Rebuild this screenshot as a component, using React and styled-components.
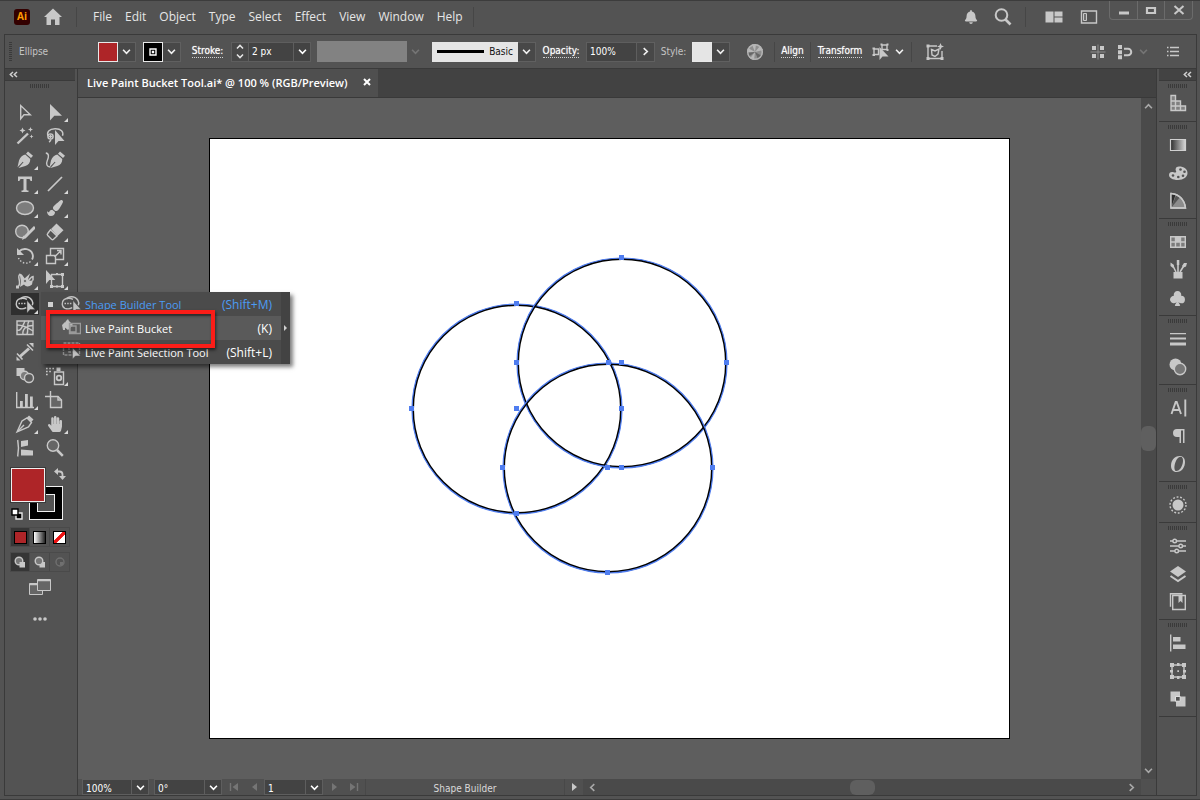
import React, { useState } from 'react'
import styled, { createGlobalStyle } from 'styled-components'
import { FaBell, FaPaintBrush, FaHandPaper } from 'react-icons/fa'
import { BsSuitClubFill } from 'react-icons/bs'

const GlobalStyle = createGlobalStyle`
  * {
    box-sizing: border-box;
  }
  body {
    margin: 0;
    background: #535353;
    color: #e6e6e6;
    font-family: 'Open Sans', 'Noto Sans', sans-serif;
    font-size: 12px;
  }
  button, select, input {
    font: inherit;
    color: inherit;
    background: none;
    border: 0;
    margin: 0;
    padding: 0;
  }
  a {
    color: inherit;
    text-decoration: none;
  }
  svg {
    display: block;
    flex: none;
  }
`

const small = `font-family: 'DejaVu Sans Condensed', 'DejaVu Sans', sans-serif; font-size: 10px;`

/* ---------- frame ---------- */

const Window = styled.div`
  display: flex;
  flex-direction: column;
  min-height: 100vh;
  padding: 0 3px 3px 4px;
  background: #535353;
  border-top: 1px solid #3c3c3c;
  border-bottom: 1px solid #3c3c3c;
  overflow: hidden;
`

const Body = styled.div`
  display: flex;
  flex: 1;
  border: 1px solid #3a3a3a;
  border-top: 0;
`

/* ---------- title bar ---------- */

const TitleBar = styled.header`
  display: flex;
  align-items: center;
  height: 34px;
  padding: 0 0 2px 10px;
  border-bottom: 1px solid #3a3a3a;
`

const Logo = styled.div`
  width: 16px;
  height: 16px;
  border-radius: 3px;
  background: #330000;
  color: #ff9a00;
  font-size: 10px;
  font-weight: 700;
  line-height: 15px;
  text-align: center;
`

const Divider = styled.div`
  width: 1px;
  height: 20px;
  background: #464646;
  margin: 0 ${p => p.$gap || 0}px;
`

const Menu = styled.nav`
  display: flex;
  gap: 13px;
  padding: 0 10px 0 16px;
  line-height: 20px;
`

const Spacer = styled.div`
  flex: 1;
`

const IconButton = styled.button`
  display: flex;
  align-items: center;
  justify-content: center;
  width: ${p => p.$w || 28}px;
  height: ${p => p.$h || 28}px;
  color: ${p => (p.$dim ? '#757575' : '#c8c8c8')};
`

const WindowButtons = styled.div`
  display: flex;
  align-self: flex-start;
  height: 19px;
  margin: 0 4px 0 7px;
  border: 1px solid #6b6b6b;
  border-top: 0;
  border-radius: 0 0 4px 4px;

  button + button {
    border-left: 1px solid #6b6b6b;
  }
`

/* ---------- control bar ---------- */

const ControlBar = styled.div`
  ${small}
  display: flex;
  align-items: center;
  height: 34px;
  border: 1px solid #3a3a3a;
  border-top: 0;
`

const VGrip = styled.div`
  width: 3px;
  height: 19px;
  margin: 0 7px 0 4px;
  background: repeating-linear-gradient(#3a3a3a 0 1px, transparent 1px 2px);
`

const Label = styled.span`
  width: ${p => p.$w}px;
  text-align: ${p => p.$align || 'center'};
  color: ${p => (p.$dim ? '#c4c4c4' : '#ffffff')};
`

const LinkLabel = styled.a`
  display: flex;
  justify-content: center;
  width: ${p => p.$w}px;

  span {
    line-height: 12px;
    border-bottom: 1px dotted #d0d0d0;
    color: #ffffff;
    text-shadow: 0 0 1px #ffffffb0;
  }
`

const Swatch = styled.button`
  display: flex;
  align-items: center;
  justify-content: center;
  width: 20px;
  height: 20px;
  background: ${p => p.$color};
  border: 1px solid #e8e8e8;
`

const DropButton = styled.button`
  display: flex;
  align-items: center;
  justify-content: center;
  width: ${p => p.$w || 18}px;
  height: 20px;
  margin-right: ${p => p.$mr || 0}px;
  background: ${p => (p.$plain ? 'none' : '#484848')};
  border: 1px solid ${p => (p.$plain ? 'transparent' : '#606060')};
  border-left: 0;
  color: ${p => (p.$dim ? '#757575' : '#f0f0f0')};
`

const Combo = styled.label`
  ${small}
  display: grid;
  align-items: center;
  width: ${p => p.$w}px;
  height: ${p => p.$h || 20}px;
  background: #434343;
  border: 1px solid #5e5e5e;
  color: #ffffff;

  select {
    grid-area: 1 / 1;
    width: 100%;
    height: 100%;
    padding: ${p => (p.$h ? 2 : 0)}px 0 0 3px;
    appearance: none;
    outline: 0;
  }
  > span {
    grid-area: 1 / 1;
    justify-self: end;
    display: flex;
    align-items: center;
    justify-content: center;
    width: 17px;
    height: 100%;
    border-left: 1px solid #5e5e5e;
    pointer-events: none;
  }
`

const Stepper = styled.div`
  display: flex;
  flex-direction: column;
  justify-content: space-around;
  align-items: center;
  width: 17px;
  height: 20px;
  background: #484848;
  border: 1px solid #5e5e5e;
  border-right: 0;

  button {
    display: flex;
  }
`

const Field = styled.input`
  width: 51px;
  height: 20px;
  padding-left: 3px;
  background: #434343;
  border: 1px solid #5e5e5e;
  color: #ffffff;
  outline: 0;
`

const ProfileBar = styled.button`
  width: 90px;
  height: 21px;
  background: #828282;
`

const Brush = styled.button`
  display: flex;
  align-items: center;
  gap: 5px;
  width: 86px;
  height: 20px;
  padding: 0 5px;
  background: #e5e5e5;
  color: #111111;

  i {
    width: 49px;
    height: 3px;
    background: #000000;
  }
`

/* ---------- tools ---------- */

const ToolPanel = styled.aside`
  display: flex;
  flex-direction: column;
  align-items: center;
  width: 70px;
`

const PanelHead = styled.div`
  display: flex;
  align-items: center;
  justify-content: ${p => p.$align || 'flex-start'};
  align-self: stretch;
  height: 12px;
  padding: 0 4px;
  background: #434343;
  border-bottom: 1px solid #3a3a3a;
  color: #d0d0d0;
`

const HGrip = styled.div`
  width: 20px;
  height: 4px;
  background: repeating-linear-gradient(90deg, #3a3a3a 0 1px, transparent 1px 2px);
`

const GripSpace = styled.div`
  padding-top: 3px;
`

const ToolGrid = styled.div`
  display: grid;
  grid-template-columns: 28px 28px;
  gap: 2px;
  margin-top: 13px;
`

const ToolSlot = styled.div`
  position: relative;
`

const Tool = styled.button`
  display: flex;
  align-items: center;
  justify-content: center;
  width: 28px;
  height: 22px;
  color: #c8c8c8;
  background: ${p => (p.$active ? '#2f2f2f' : 'none')};
`

const Corner = styled.i`
  position: absolute;
  right: 1px;
  bottom: 1px;
  border: solid transparent;
  border-width: 0 0 4px 4px;
  border-bottom-color: #d8d8d8;
  pointer-events: none;
`

const Flyout = styled.div`
  position: absolute;
  z-index: 2;
  top: -1px;
  left: 30px;
  display: flex;
  width: 249px;
  background: #4b4b4b;
  box-shadow: 3px 3px 4px #00000080;
  color: #ffffff;
`

const FlyoutList = styled.div`
  flex: 1;
`

const FlyoutRow = styled.button`
  display: grid;
  grid-template-columns: 13px 24px 1fr auto;
  align-items: center;
  width: 100%;
  height: 24px;
  padding: 0 9px 0 7px;
  font-size: 11px;
  text-align: left;
  color: ${p => (p.$active ? '#4b9cf5' : '#ffffff')};
  background: ${p => (p.$hover ? '#5a5a5a' : 'none')};

  svg {
    color: #c0c0c0;
  }
  i {
    width: 5px;
    height: 5px;
    background: ${p => (p.$active ? '#d0d0d0' : 'transparent')};
  }
  span {
    font-size: 12px;
  }
`

const TearOff = styled.button`
  display: flex;
  align-items: center;
  justify-content: center;
  width: 9px;
  background: #434343;
`

const Callout = styled.div`
  position: absolute;
  top: 18px;
  left: 5px;
  width: 169px;
  height: 38px;
  border: 4px solid #fb1d18;
  box-shadow: 1px 2px 3px #00000090, inset 1px 2px 3px #00000070;
  pointer-events: none;
`

const ColorWell = styled.div`
  display: grid;
  grid-template-columns: 18px 16px 18px 3px;
  grid-template-rows: 18px 16px 18px;
  align-self: flex-start;
  margin: 9px 0 7px 6px;
`

const FillBox = styled.button`
  grid-area: 1 / 1 / 3 / 3;
  z-index: 1;
  background: #ae2528;
  border: 1px solid #f0f0f0;
  outline: 1px solid #3a3a3a;
`

const StrokeBox = styled.button`
  grid-area: 2 / 2 / 4 / 4;
  display: flex;
  align-items: center;
  justify-content: center;
  background: #000000;
  border: 1px solid #f0f0f0;

  i {
    width: 18px;
    height: 18px;
    background: #535353;
    border: 1px solid #f0f0f0;
  }
`

const WellIcon = styled.button`
  grid-area: ${p => p.$area};
  align-self: ${p => p.$align};
  justify-self: ${p => p.$justify};
  color: #c8c8c8;
`

const ModeRow = styled.div`
  display: flex;
  align-self: flex-start;
  margin: 0 0 5px 5px;
  border: 1px solid #4a4a4a;

  button {
    display: flex;
    align-items: center;
    justify-content: center;
    width: 18px;
    height: 18px;
    color: #c8c8c8;
  }
  button + button {
    border-left: 1px solid #484848;
    width: 20px;
  }
  button:first-child {
    background: #363636;
  }
  button:disabled {
    color: #707070;
  }
`

const Chip = styled.i`
  width: 13px;
  height: 13px;
  border: 1px solid #000000;
  background: ${p => p.$fill};
`

/* ---------- document ---------- */

const Main = styled.main`
  display: flex;
  flex-direction: column;
  flex: 1;
  min-width: 0;
  border: solid #3a3a3a;
  border-width: 0 1px;
  margin: 0 2px;
`

const TabBar = styled.div`
  display: flex;
  height: 29px;
  background: #424242;
  border-bottom: 1px solid #393939;
`

const Tab = styled.div`
  display: flex;
  align-items: center;
  gap: 15px;
  padding: 0 7px 2px 9px;
  background: #4f4f4f;
  font-size: 11px;
  font-weight: 600;
  color: #ffffff;

  button {
    display: flex;
  }
`

const Viewport = styled.div`
  display: flex;
  flex: 1;
`

const Pasteboard = styled.div`
  display: flex;
  flex: 1;
  align-items: center;
  justify-content: center;
  background: #5e5e5e;
  overflow: hidden;
`

const Artboard = styled.div`
  flex: none;
  background: #ffffff;
  border: 1px solid #000000;
`

const ScrollTrack = styled.div`
  display: flex;
  flex-direction: ${p => (p.$vertical ? 'column' : 'row')};
  flex: ${p => (p.$vertical ? 'none' : 1)};
  align-items: center;
  justify-content: space-between;
  padding: ${p => (p.$vertical ? '4px 0' : '0 5px')};
  width: ${p => (p.$vertical ? '15px' : 'auto')};
  background: #4a4a4a;
  color: #a8a8a8;

  i {
    width: ${p => (p.$vertical ? 15 : 25)}px;
    height: ${p => (p.$vertical ? 25 : 15)}px;
    border-radius: 6px;
    background: #5f5f5f;
  }
  button {
    display: flex;
  }
`

const StatusBar = styled.footer`
  ${small}
  display: flex;
  height: 16px;
  padding: 0 15px 0 4px;
  background: #505050;
`

const StatusLabel = styled.div`
  width: 200px;
  margin-left: 2px;
  border-right: 1px solid #484848;
  border-left: 1px solid #484848;
  color: #d8d8d8;
  line-height: 19px;
  text-align: center;
`

/* ---------- panel dock ---------- */

const Dock = styled.aside`
  width: 37px;
`

const DockGroup = styled.div`
  display: flex;
  flex-direction: column;
  align-items: center;
  padding: 3px 0;
  border-bottom: 1px solid #3a3a3a;

  > div {
    margin-bottom: 2px;
  }
`

/* ---------- icons ---------- */

function Svg({ size = 20, children }) {
  return (
    <svg width={size} height={size} viewBox={`0 0 ${size} ${size}`} fill="none" stroke="currentColor" strokeWidth="1.4">
      {children}
    </svg>
  )
}

function Chevron({ dir = 'down', w = 9 }) {
  const turn = { down: 0, up: 180, left: 90, right: -90 }[dir]
  return (
    <svg width={w} height={w} viewBox="0 0 10 10" fill="none" stroke="currentColor" strokeWidth="1.8">
      <path d="M1.2 3 5 7l3.8-4" transform={`rotate(${turn} 5 5)`} />
    </svg>
  )
}

function DoubleArrow() {
  return (
    <svg width="9" height="7" viewBox="0 0 9 7" fill="none" stroke="currentColor" strokeWidth="1.5">
      <path d="M4 1 1.3 3.5 4 6M8 1 5.3 3.5 8 6" />
    </svg>
  )
}

const solid = { fill: 'currentColor', stroke: 'none' }
const soft = { fill: '#7d7d7d' }

const nib = (
  <path
    d="m13 1.500 5 4.300-2 2.300-5-4.400zM10.300 4.600l5 4.400c0 3.600-1.700 5.800-5 7L3.500 18l5-5.700-.7-.6-5.300 5.500L4 10.500c1.200-3.200 3.300-5.300 6.300-5.900z"
    {...solid}
  />
)

const icons = {
  direct: <path d="M5.700 3.600v13.200l3.300-4.100h6.300z" />,
  select: <path d="M5 2v16.500l4.300-4.800H17z" {...solid} />,
  wand: (
    <>
      <path d="M2.500 17.500 13 7.500" strokeWidth="2.400" />
      <path d="m7.500 1.500.9 2.100 2.100.9-2.100.9-.9 2.100-.9-2.100-2.100-.9 2.100-.9zM15.500 1l.7 1.800 1.800.7-1.800.7-.7 1.800-.7-1.800-1.800-.7 1.800-.7zM16.500 8.500l.6 1.400 1.400.6-1.400.6-.6 1.400-.6-1.400-1.400-.6 1.400-.6z" {...solid} />
    </>
  ),
  lasso: (
    <>
      <path d="M3 10C1.500 6 4 3 10 2.800s9 3 7.500 7" />
      <circle cx="5.500" cy="10.500" r="2.600" />
      <path d="M3.500 10.500h4M5.500 8.500v4M6 13.500c-.5 1.500-1 2-2 2.500" />
      <path d="M10 4v15l3.500-4h6z" {...solid} />
    </>
  ),
  pen: nib,
  curvature: (
    <>
      <path d="M.8 3c3.500.5 3 4 1.500 7.500s-.5 6.500 3 6.500" />
      <g transform="translate(2 0)">{nib}</g>
    </>
  ),
  type: <path d="M3 2.500h14V7h-1.500c-.3-1.500-.8-2-2-2h-2v10.500c0 .7.500 1 2 1V18h-7v-1.500c1.500 0 2-.3 2-1V5h-2c-1.200 0-1.700.5-2 2H3z" {...solid} />,
  line: <path d="M3 17 17 3" strokeWidth="1.700" />,
  ellipse: <ellipse cx="10" cy="10" rx="8.500" ry="6.500" {...soft} />,
  shaper: (
    <>
      <circle cx="7" cy="9.500" r="6.300" {...soft} />
      <path d="M9.500 15.500 20 5" strokeWidth="3" />
      <path d="M8.200 13.500 11 16l-4 2z" {...solid} />
    </>
  ),
  eraser: (
    <>
      <path d="m11.500 1.500 7 6.800-6 5.700L6 7z" {...solid} />
      <path d="M5.500 7.800 12 14l-3.500 3.300c-.6.6-1.300.6-2 0L2.700 13.500c-.6-.6-.6-1.300 0-2z" />
    </>
  ),
  rotate: (
    <>
      <path d="M4 5.500c4-4 11.500-3 13.500 2.500.7 2 .4 4-.5 5.500" strokeWidth="1.900" />
      <path d="M2 2v7h7z" {...solid} />
      <path d="M15.500 15.500C12 18.500 6 17.500 3.500 12" strokeDasharray="1.500 1.800" />
    </>
  ),
  scale: (
    <>
      <path d="M5.500 9V2.500h13v11H11" />
      <path d="M1.500 9.500h9v8h-9zM9.500 11l6-6M12 4.500h4v4" />
    </>
  ),
  width: (
    <>
      <path d="M2.500 17C8 14 1 6 5 4.500c3 0 3.500 6.500 7 6.500 3 0 3-4.500 6-4.500v4" strokeWidth="1.500" />
      <path d="m4.500 3 3 3 1.500 3 6-5.500-2 6c1.500 2 3.500 1.500 5 0l-1 5c-3 2.500-6 2.500-8 0l-4 2.500 1-5z" {...solid} />
      <circle cx="10" cy="11" r="1.500" fill="#535353" strokeWidth="1" />
      <path d="M1 15.500h3v3H1z" {...solid} />
    </>
  ),
  transform: (
    <>
      <path d="M6.500 4.500h11v12h-11z" />
      <path d="M16 3h3v3h-3zM16 15h3v3h-3zM5 15h3v3H5zM11 3h2v2h-2zM11 15.500h2v2h-2z" {...solid} />
      <path d="M1 0v14l3.300-4h6z" {...solid} />
    </>
  ),
  builder: (
    <>
      <path d="M5.500 5.200C7 2.600 13.500 1 17 6.500c.9 1.400.9 3.200.3 4.800M3 5.600C.4 7.800.6 13 4 14.300c2.300.8 5.300.5 7.300-.6" />
      <path d="M3 5.600c2.600-1.500 6.500-1.600 9-.2" />
      <path d="M3.500 9.500h8" strokeDasharray="1.500 1.200" />
      <path d="M12 6.500V19l3-3.500h5z" fill="currentColor" stroke="#4b4b4b" strokeWidth=".5" />
    </>
  ),
  mesh: (
    <>
      <path d="M2 3h16v13.500H2z" fill="#606060" />
      <path d="M2 12c4 2 6-5 8-9M8 16.500c-1-6 4-9 10-9M2 7c5 0 10 2 16 6M14 3c-3 4 0 8-2 13.500" />
    </>
  ),
  measure: (
    <>
      <path d="m4 13.500 9-8 2 2-9 8z" {...solid} />
      <path d="m2 11.500 5.500 6M12 2.500l6 6" strokeWidth="1.600" />
      <path d="M1.500 18.500v-4l4 4zM18.500 1v4.500L14 1z" {...solid} />
    </>
  ),
  blend: (
    <>
      <path d="M1.500 2h8v8h-8z" {...solid} />
      <circle cx="9.500" cy="9.500" r="4.200" {...soft} />
      <circle cx="14" cy="12" r="4.500" fill="#5c5c5c" />
    </>
  ),
  spray: (
    <>
      <path d="M9.500 6h9v12.500h-9z" />
      <path d="M11.500 1.500h4V5h-4z" {...solid} />
      <circle cx="14" cy="12" r="2.300" strokeWidth="1.800" />
      <path d="M1 2.500h8M1 5.500h6M1 8.500h2" strokeDasharray="1.700 1.500" strokeWidth="1.700" />
    </>
  ),
  graph: <><path d="M1.700 2v15.500H19" /><path d="M5 11h2.800v6H5zM10 4h2.800v13H10zM15 6.500h2.800V17H15z" {...solid} /></>,
  artboard: (
    <>
      <path d="M5.500 6.500h7.500l3.500 3.500v7.500h-11z" fill="#666666" />
      <path d="M5.500 1v5.500M0 6.500h5.500M13 6.500V10h3.500" />
    </>
  ),
  slice: (
    <>
      <path d="M2 18 7 7l5-3 4.500 4.500L13.500 13z" />
      <path d="m12 3.500 2-2 4.500 4-2.300 2.500z" {...solid} />
      <path d="m3 17 6-6" />
    </>
  ),
  alignTool: (
    <>
      <path d="M2.700 2c1 5 1 11 0 16.500" />
      <path d="m6 3 7-1v5.500L6 9zM6 11.500l12 1v5H6z" {...solid} />
    </>
  ),
  zoom: (
    <>
      <circle cx="8" cy="7.500" r="5.700" fill="#666666" />
      <path d="m12 12 5.800 5.800" strokeWidth="2.500" />
    </>
  ),
  bucket: (
    <>
      <path d="m5 3 2-2 1 2 4 4-5 5-5-4zM1 7l3-3v8H2z" {...solid} />
      <path d="M8.500 5.500h11v10h-11zM9 8h6v6H9z" stroke="#9a9a9a" />
    </>
  ),
  paintSelect: (
    <>
      <path d="M2.500 1h16v12h-16zM8 1v9h6" stroke="#8a8a8a" strokeDasharray="3 1" />
      <path d="M11.500 5.500V17l3-3h5z" fill="currentColor" stroke="#4b4b4b" strokeWidth=".5" />
    </>
  ),

  /* dock */
  properties: (
    <path d="M3 1.500h4.500v15H3zM7.500 7h5v9.500h-5zM12.500 12h5v4.500h-5zM3 7h4.500M3 12h9.500" fill="#808080" />
  ),
  gradient: (
    <>
      <defs>
        <linearGradient id="gr1">
          <stop offset="0" stopColor="#2c2c2c" />
          <stop offset="1" stopColor="#d8d8d8" />
        </linearGradient>
      </defs>
      <path d="M2.500 4.500h15v11h-15z" fill="url(#gr1)" stroke="#d0d0d0" strokeWidth="1.200" />
    </>
  ),
  palette: (
    <>
      <path d="M11 3.500c5 0 8.500 2.500 8.500 6.500s-4 7-9.500 7-9-2.200-9-5c0-2 1.200-3 3-3 1.500 0 2.300.8 3.500.5 2-.5-.5-2 .2-3.800C8 4.300 9.300 3.500 11 3.500z" {...solid} />
      <g fill="#535353" stroke="none">
        <circle cx="12.500" cy="6.500" r="1.300" />
        <circle cx="16.500" cy="8.800" r="1.300" />
        <circle cx="15" cy="12.800" r="1.300" />
        <circle cx="10.300" cy="14" r="1.300" />
        <circle cx="5" cy="12.500" r="1.300" />
      </g>
    </>
  ),
  guide: (
    <>
      <path d="M3 2.500c8 .5 13.500 6 14.500 14.500H3z" fill="#8c8c8c" />
      <path d="M3 17V3l4.500 1z" fill="#2c2c2c" stroke="none" />
      <path d="m3 17 5-12.500 3.500 2.200z" fill="#555555" stroke="none" />
      <path d="M3 17V2.500c8 .5 13.500 6 14.500 14.500z" />
    </>
  ),
  swatches: (
    <>
      <path d="M2.700 4.700h14.600v10.600H2.700z" fill="#7c7c7c" />
      <path d="M2.700 10h14.600M7.500 4.700v10.600M12.500 4.700v10.600" />
      <path d="M7.500 5h5v5h-5z" {...solid} />
    </>
  ),
  brushes: (
    <>
      <path d="M5.500 12h9v6.500h-9z" {...solid} />
      <path d="M8 12 4.500 5M10 12V3.500M12 12l4-6.500" strokeWidth="1.600" />
      <path d="M2.500 2.500 6 5 5 8 2.500 6zM8.800 0h2.500v5H8.800zM14 6l2-3h3l-1 3.500-2.500 1z" {...solid} />
    </>
  ),
  stroke: <path d="M2 4h16v1.300H2zM2 8.500h16v2H2zM2 13.500h16v3H2z" {...solid} />,
  transparency: (
    <>
      <circle cx="7.500" cy="7.500" r="6" {...solid} />
      <circle cx="12" cy="12" r="5.700" fill="#777777" />
    </>
  ),
  character: <path d="m3.500 16 4.200-12h1l4.300 12M5 12h6.500M17.300 1.500v17" strokeWidth="1.900" />,
  paragraph: <path d="M9 3h7.500v14H15V4.500h-2V17h-1.500v-6H9a4 4 0 0 1 0-8z" {...solid} />,
  opentype: <path d="M12 2C6 2 3 7 3 11.500 3 15.500 5 18 8.500 18 14 18 17 13 17 8c0-3.500-2-6-5-6zm1 .8c4.500 1.200 1 14.700-5 14.200-3.500-1-.5-14.500 5-14.200z" {...solid} fillRule="evenodd" />,
  appearance: (
    <>
      <circle cx="10" cy="10" r="5.500" {...solid} />
      <circle cx="10" cy="10" r="8" strokeDasharray="1.900 1.700" />
    </>
  ),
  sliders: (
    <>
      <path d="M2 5h3M8.500 5H18M2 10h9M14.500 10H18M2 15h5M10.500 15H18" />
      <circle cx="6.700" cy="5" r="1.800" />
      <circle cx="12.700" cy="10" r="1.800" />
      <circle cx="8.700" cy="15" r="1.800" />
    </>
  ),
  layers: (
    <>
      <path d="m10 2 8 5.500-8 5.500-8-5.500z" {...solid} />
      <path d="m2.500 12 7.500 5 7.500-5" strokeWidth="2" />
    </>
  ),
  libraries: (
    <>
      <path d="M4.700 3.500h12.600v14H4.700zM14.500 1.700H2.500v13" />
      <path d="M10.500 4h4v7l-2-2-2 2z" {...solid} />
    </>
  ),
  alignPanel: <><path d="M2.700 1.500v17" /><path d="M5 4h7.500v4.500H5zM5 11.500h12.500V16H5z" {...solid} /></>,
  transformPanel: (
    <>
      <path d="M4 4h12v12H4z" />
      <path d="M2 2h4v4H2zM14 2h4v4h-4zM2 14h4v4H2zM14 14h4v4h-4zM9 2h2.500v3H9zM9 15h2.500v3H9zM2 9h3v2.500H2zM15 9h3v2.500h-3zM9.300 9.300h1.700V11H9.300z" {...solid} />
    </>
  ),
  pathfinder: (
    <>
      <path d="M2.500 2.500H12v5h5.500v10H8v-5H2.500z" {...solid} />
      <path d="M7.500 7.500h4.700v4.700H7.500z" fill="#535353" stroke="#e0e0e0" strokeWidth="1" />
    </>
  ),

  /* bars */
  home: <path d="M10 1.500 1 10h2.500v8H8v-5.500h4V18h4.500v-8H19z" {...solid} />,
  search: <><circle cx="8.500" cy="8" r="5.800" strokeWidth="2" /><path d="m12.500 12.500 5 5" strokeWidth="2.600" /></>,
  workspace: <path d="M1.500 4.500h8v11h-8zM10.500 4.500h8v5h-8zM10.500 10.500h8v5h-8z" {...solid} />,
  panel: <><path d="M2.500 4h15v12h-15z" /><path d="M4.500 6.500h3v7h-3z" strokeWidth="1" /><path d="M6 7.500v5" strokeDasharray="1 1" strokeWidth="1" /></>,
  globe: (
    <>
      <circle cx="10" cy="10" r="8" fill="#8e8e8e" stroke="none" />
      <path d="M10 10 3 6l-1 4zM10 10 5 16.500l4 1.500zM10 10l8-2-3-4zM10 10l1-8-4 .5z" fill="#b8b8b8" stroke="none" />
      <path d="m10 10 7 4-4 3zM10 10 2 11l2 3.500z" fill="#666666" stroke="none" />
      <circle cx="10" cy="10" r="7.300" stroke="#b5b5b5" />
    </>
  ),
  isolate: (
    <>
      <path d="M3 7h4.500v5.500H3zM11 3h5v4.500h-5z" />
      <path d="M1.500 5.500H4v2H1.500zM1.500 12H4v2H1.500zM9.500 1.500h2v2h-2zM15.500 1.500h2v2h-2zM15.500 7h2v2h-2z" {...solid} />
      <path d="M8.500 5v13l3-3.500h6z" {...solid} />
    </>
  ),
  recolor: (
    <>
      <path d="M3 4h9M3 4v12.500h14V9" />
      <path d="M1.500 2.500h3v3h-3zM1.500 15h3v3h-3zM15.500 15h3v3h-3zM15.500 1l1 2.500 2.500 1-2.500 1-1 2.500-1-2.500-2.500-1 2.500-1z" {...solid} />
      <path d="M6.500 7.500 10 9l4-2-1 5-3 2.500L7 13z" />
    </>
  ),
  snapGrid: (
    <>
      <path d="M4 4h4v4H4zM12 4h4v4h-4zM4 12h4v4H4zM12 12h4v4h-4z" {...solid} />
      <path d="M10 2.500v15M2.500 10h15" stroke="#8c8c8c" strokeWidth="1" />
    </>
  ),
  magnet: <><path d="M3 3h4v4H3zM3 8.200h4v4H3zM3 13.300h4v4H3z" {...solid} /><path d="M9 6.700h4a3 3 0 0 1 0 6.500H9" strokeWidth="2" /></>,
  list: <path d="M4 5.500h1.500M4 9.500h1.500M4 13.500h1.500M7 5.500h9M7 9.500h9M7 13.500h9" strokeWidth="1.500" />,
}

const tools = [
  ['Direct Selection', 'direct'], ['Selection', 'select', 1],
  ['Magic Wand', 'wand'], ['Lasso', 'lasso'],
  ['Pen', 'pen', 1], ['Curvature', 'curvature'],
  ['Type', 'type', 1], ['Line Segment', 'line', 1],
  ['Ellipse', 'ellipse', 1], ['Paintbrush', <FaPaintBrush size={16} />, 1],
  ['Shaper', 'shaper', 1], ['Eraser', 'eraser', 1],
  ['Rotate', 'rotate', 1], ['Scale', 'scale', 1],
  ['Width', 'width', 1], ['Free Transform', 'transform', 1],
  ['Shape Builder', 'builder', 1], ['Perspective Grid', 'scale', 1],
  ['Mesh', 'mesh'], ['Gradient', 'gradient'],
  ['Measure', 'measure'], ['Eyedropper', 'line'],
  ['Blend', 'blend'], ['Symbol Sprayer', 'spray', 1],
  ['Column Graph', 'graph', 1], ['Artboard', 'artboard'],
  ['Slice', 'slice', 1], ['Hand', <FaHandPaper size={16} />, 1],
  ['Align', 'alignTool'], ['Zoom', 'zoom'],
]

const flyoutItems = [
  { name: 'Shape Builder Tool', keys: '(Shift+M)', icon: 'builder' },
  { name: 'Live Paint Bucket', keys: '(K)', icon: 'bucket' },
  { name: 'Live Paint Selection Tool', keys: '(Shift+L)', icon: 'paintSelect' },
]

const dock = [
  [['Properties', 'properties']],
  [['Gradient', 'gradient'], ['Color', 'palette'], ['Color Guide', 'guide']],
  [['Swatches', 'swatches'], ['Brushes', 'brushes'], ['Symbols', <BsSuitClubFill size={17} />]],
  [['Stroke', 'stroke'], ['Transparency', 'transparency']],
  [['Character', 'character'], ['Paragraph', 'paragraph'], ['OpenType', 'opentype']],
  [['Appearance', 'appearance']],
  [['Graphic Styles', 'sliders'], ['Layers', 'layers'], ['Libraries', 'libraries']],
  [['Align', 'alignPanel'], ['Transform', 'transformPanel'], ['Pathfinder', 'pathfinder']],
]

const circles = [[517, 409], [622, 363], [608, 468]]
const anchors = [
  [516, 303], [411, 408], [621, 408], [516, 513], [516, 408],
  [621, 257], [516, 362], [726, 362], [621, 467], [621, 362],
  [608, 362], [502, 467], [712, 467], [607, 572], [607, 467],
]

function Glyph({ icon }) {
  return typeof icon === 'string' ? <Svg>{icons[icon]}</Svg> : icon
}

function Select({ label, value, w, h }) {
  return (
    <Combo $w={w} $h={h}>
      <select aria-label={label} defaultValue={value}>
        <option>{value}</option>
      </select>
      <span><Chevron /></span>
    </Combo>
  )
}

function Title() {
  return (
    <TitleBar>
      <Logo>Ai</Logo>
      <IconButton $w={46} aria-label="Home"><Glyph icon="home" /></IconButton>
      <Divider />
      <Menu>
        {['File', 'Edit', 'Object', 'Type', 'Select', 'Effect', 'View', 'Window', 'Help'].map(m => (
          <a href="#menu" key={m}>{m}</a>
        ))}
      </Menu>
      <Divider />
      <Spacer />
      <IconButton $w={32} aria-label="Notifications"><FaBell size={14} /></IconButton>
      <IconButton $w={32} aria-label="Search"><Glyph icon="search" /></IconButton>
      <Divider $gap={6} />
      <IconButton $w={44} aria-label="Arrange documents"><Glyph icon="workspace" /></IconButton>
      <IconButton $w={26} aria-label="Workspace"><Glyph icon="panel" /></IconButton>
      <WindowButtons>
        <IconButton $w={27} $h={18} aria-label="Minimize">
          <Svg size={12}><path d="M1 9h10" strokeWidth="3" /></Svg>
        </IconButton>
        <IconButton $w={27} $h={18} aria-label="Maximize">
          <Svg size={12}><path d="M2 4h8v5H2z" strokeWidth="2.200" /></Svg>
        </IconButton>
        <IconButton $w={28} $h={18} aria-label="Close">
          <Svg size={12}><path d="m1.500 2 9 8M10.500 2l-9 8" strokeWidth="2" /></Svg>
        </IconButton>
      </WindowButtons>
    </TitleBar>
  )
}

function Controls() {
  return (
    <ControlBar>
      <VGrip />
      <Label $w={79} $dim $align="left">Ellipse</Label>
      <Swatch $color="#ae2528" aria-label="Fill color" />
      <DropButton $mr={7} aria-label="Fill options"><Chevron /></DropButton>
      <Swatch $color="#000000" aria-label="Stroke color">
        <Svg size={8}><path d="M1 1h6v6H1zM3.500 3.500h1v1h-1z" stroke="#ffffff" /></Svg>
      </Swatch>
      <DropButton $mr={3} aria-label="Stroke options"><Chevron /></DropButton>
      <LinkLabel href="#stroke" $w={47}><span>Stroke:</span></LinkLabel>
      <Stepper>
        <button aria-label="Increase"><Chevron dir="up" w={8} /></button>
        <button aria-label="Decrease"><Chevron w={8} /></button>
      </Stepper>
      <Select label="Stroke weight" value="2 px" w={63} />
      <Label $w={6} />
      <ProfileBar aria-label="Width profile" />
      <DropButton $plain $dim $mr={7} aria-label="Profiles"><Chevron /></DropButton>
      <Brush><i />Basic</Brush>
      <DropButton aria-label="Brush definition"><Chevron /></DropButton>
      <LinkLabel href="#opacity" $w={50}><span>Opacity:</span></LinkLabel>
      <Field aria-label="Opacity" defaultValue="100%" />
      <DropButton aria-label="Opacity slider"><Chevron dir="right" /></DropButton>
      <Label $w={37} $dim>Style:</Label>
      <Swatch $color="#e5e5e5" aria-label="Graphic style" />
      <DropButton $mr={9} aria-label="Style options"><Chevron /></DropButton>
      <IconButton $w={32} aria-label="Recolor"><Glyph icon="globe" /></IconButton>
      <Label $w={3} />
      <Divider />
      <LinkLabel href="#align" $w={35}><span>Align</span></LinkLabel>
      <Divider />
      <LinkLabel href="#transform" $w={58}><span>Transform</span></LinkLabel>
      <IconButton $w={24} aria-label="Isolate"><Glyph icon="isolate" /></IconButton>
      <DropButton $plain $w={14} $mr={4} aria-label="Isolate options"><Chevron /></DropButton>
      <Divider />
      <IconButton $w={46} aria-label="Edit group"><Glyph icon="recolor" /></IconButton>
      <Spacer />
      <IconButton $w={28} aria-label="Snap to grid"><Glyph icon="snapGrid" /></IconButton>
      <IconButton $w={26} aria-label="Snap to point"><Glyph icon="magnet" /></IconButton>
      <DropButton $plain $dim $w={12} aria-label="Snap options"><Chevron /></DropButton>
      <IconButton $w={46} aria-label="Menu"><Glyph icon="list" /></IconButton>
    </ControlBar>
  )
}

function ToolFlyout({ current, onPick }) {
  return (
    <Flyout>
      <FlyoutList>
        {flyoutItems.map((item, i) => (
          <FlyoutRow key={item.name} $active={i === current} $hover={i === 1} onClick={() => onPick(i)}>
            <i />
            <Glyph icon={item.icon} />
            {item.name}
            <span>{item.keys}</span>
          </FlyoutRow>
        ))}
      </FlyoutList>
      <TearOff aria-label="Tear off">
        <svg width="3" height="6"><path d="M0 0v6l3-3z" fill="#d0d0d0" /></svg>
      </TearOff>
      <Callout />
    </Flyout>
  )
}

function Tools() {
  const [current, setCurrent] = useState(0)

  return (
    <ToolPanel>
      <PanelHead><DoubleArrow /></PanelHead>
      <GripSpace><HGrip /></GripSpace>
      <ToolGrid>
        {tools.map(([name, icon, more]) => (
          <ToolSlot key={name}>
            <Tool $active={icon === 'builder'} aria-label={name}><Glyph icon={icon} /></Tool>
            {more && <Corner />}
            {icon === 'builder' && <ToolFlyout current={current} onPick={setCurrent} />}
          </ToolSlot>
        ))}
      </ToolGrid>
      <ColorWell>
        <FillBox aria-label="Fill" />
        <StrokeBox aria-label="Stroke"><i /></StrokeBox>
        <WellIcon $area="1 / 3 / 2 / 5" $align="start" $justify="end" aria-label="Swap fill and stroke">
          <Svg size={12}>
            <path d="M3 3.500h2.500c2 0 3 1 3 3V9" strokeWidth="1.800" />
            <path d="M0 3.500 4 0v7zM8.500 12 5 8h7z" {...solid} />
          </Svg>
        </WellIcon>
        <WellIcon $area="3 / 1" $align="end" $justify="start" aria-label="Default fill and stroke">
          <Svg size={12}>
            <path d="M5 5h6v6H5z" fill="#000000" stroke="#e8e8e8" />
            <path d="M1 1h6v6H1z" fill="#ffffff" stroke="#000000" />
          </Svg>
        </WellIcon>
      </ColorWell>
      <ModeRow>
        <button aria-label="Color"><Chip $fill="#ae2528" /></button>
        <button aria-label="Gradient"><Chip $fill="linear-gradient(90deg, #ffffff, #222222)" /></button>
        <button aria-label="None">
          <Chip $fill="linear-gradient(135deg, #ffffff 40%, #ee1111 41% 59%, #ffffff 60%)" />
        </button>
      </ModeRow>
      <ModeRow>
        <button aria-label="Draw normal">
          <Svg size={12}><circle cx="5" cy="5" r="3.800" fill="#777777" /><path d="M5.500 6H11v5.500H5.500z" {...solid} /></Svg>
        </button>
        <button aria-label="Draw behind">
          <Svg size={12}><path d="M5.500 6H11v5.500H5.500z" {...solid} /><circle cx="5" cy="5" r="3.800" fill="#777777" /></Svg>
        </button>
        <button aria-label="Draw inside" disabled>
          <Svg size={12}><circle cx="6" cy="6" r="4" /><path d="M6 6h3v3H6z" {...solid} /></Svg>
        </button>
      </ModeRow>
      <IconButton $w={30} $h={20} aria-label="Screen mode">
        <svg width="22" height="16" viewBox="0 0 22 16" fill="#666666" stroke="currentColor">
          <path d="M.5 4.500h13v11H.5z" />
          <path d="M8.500.5h13v11h-13z" />
          <path d="M8.500 1.500h13M.5 5.500h8" strokeWidth="1.500" />
        </svg>
      </IconButton>
      <IconButton $w={30} $h={44} aria-label="Edit toolbar">
        <svg width="14" height="4" fill="currentColor">
          <circle cx="2" cy="2" r="1.800" />
          <circle cx="7" cy="2" r="1.800" />
          <circle cx="12" cy="2" r="1.800" />
        </svg>
      </IconButton>
    </ToolPanel>
  )
}

function Drawing() {
  return (
    <svg width="799" height="599" viewBox="210 139 799 599" fill="none">
      {circles.map(([x, y]) => (
        <g key={x}>
          <circle cx={x} cy={y} r="104" stroke="#000000" strokeWidth="2" />
          <circle cx={x} cy={y} r="105" stroke="#4f7df0" strokeWidth="1.200" />
        </g>
      ))}
      {anchors.map(([x, y], i) => (
        <rect key={i} x={x - 2} y={y - 2} width="5" height="5" fill="#4f7df0" />
      ))}
    </svg>
  )
}

function Document() {
  return (
    <Main>
      <TabBar>
        <Tab>
          <span>Live Paint Bucket Tool.ai* @ 100 % (RGB/Preview)</span>
          <button aria-label="Close document">
            <Svg size={8}><path d="m1 1 6 6M7 1 1 7" strokeWidth="2" /></Svg>
          </button>
        </Tab>
      </TabBar>
      <Viewport>
        <Pasteboard>
          <Artboard><Drawing /></Artboard>
        </Pasteboard>
        <ScrollTrack $vertical>
          <button aria-label="Scroll up"><Chevron dir="up" /></button>
          <i />
          <button aria-label="Scroll down"><Chevron /></button>
        </ScrollTrack>
      </Viewport>
      <StatusBar>
        <Select label="Zoom" value="100%" w={67} h={16} />
        <Label $w={5} />
        <Select label="Rotate view" value="0°" w={68} h={16} />
        <IconButton $w={24} $h={16} $dim aria-label="First artboard">
          <Svg size={10}><path d="M1.500 1v8" /><path d="M9 1v8L3.500 5z" {...solid} /></Svg>
        </IconButton>
        <IconButton $w={18} $h={16} $dim aria-label="Previous artboard">
          <Svg size={10}><path d="M7 1v8L2 5z" {...solid} /></Svg>
        </IconButton>
        <Select label="Artboard" value="1" w={59} h={16} />
        <IconButton $w={22} $h={16} $dim aria-label="Next artboard">
          <Svg size={10}><path d="M3 1v8l5-4z" {...solid} /></Svg>
        </IconButton>
        <IconButton $w={18} $h={16} $dim aria-label="Last artboard">
          <Svg size={10}><path d="M8.500 1v8" /><path d="M1 1v8l5.500-4z" {...solid} /></Svg>
        </IconButton>
        <StatusLabel>Shape Builder</StatusLabel>
        <IconButton $w={18} $h={16} aria-label="Status options">
          <Svg size={10}><path d="M3 1v8l5-4z" {...solid} /></Svg>
        </IconButton>
        <ScrollTrack>
          <button aria-label="Scroll left"><Chevron dir="left" /></button>
          <i />
          <button aria-label="Scroll right"><Chevron dir="right" /></button>
        </ScrollTrack>
      </StatusBar>
    </Main>
  )
}

export default function App() {
  return (
    <Window>
      <GlobalStyle />
      <Title />
      <Controls />
      <Body>
        <Tools />
        <Document />
        <Dock>
          <PanelHead $align="flex-end"><DoubleArrow /></PanelHead>
          {dock.map((group, i) => (
            <DockGroup key={i}>
              <HGrip />
              {group.map(([name, icon]) => (
                <IconButton key={name} $w={36} aria-label={name}><Glyph icon={icon} /></IconButton>
              ))}
            </DockGroup>
          ))}
        </Dock>
      </Body>
    </Window>
  )
}
